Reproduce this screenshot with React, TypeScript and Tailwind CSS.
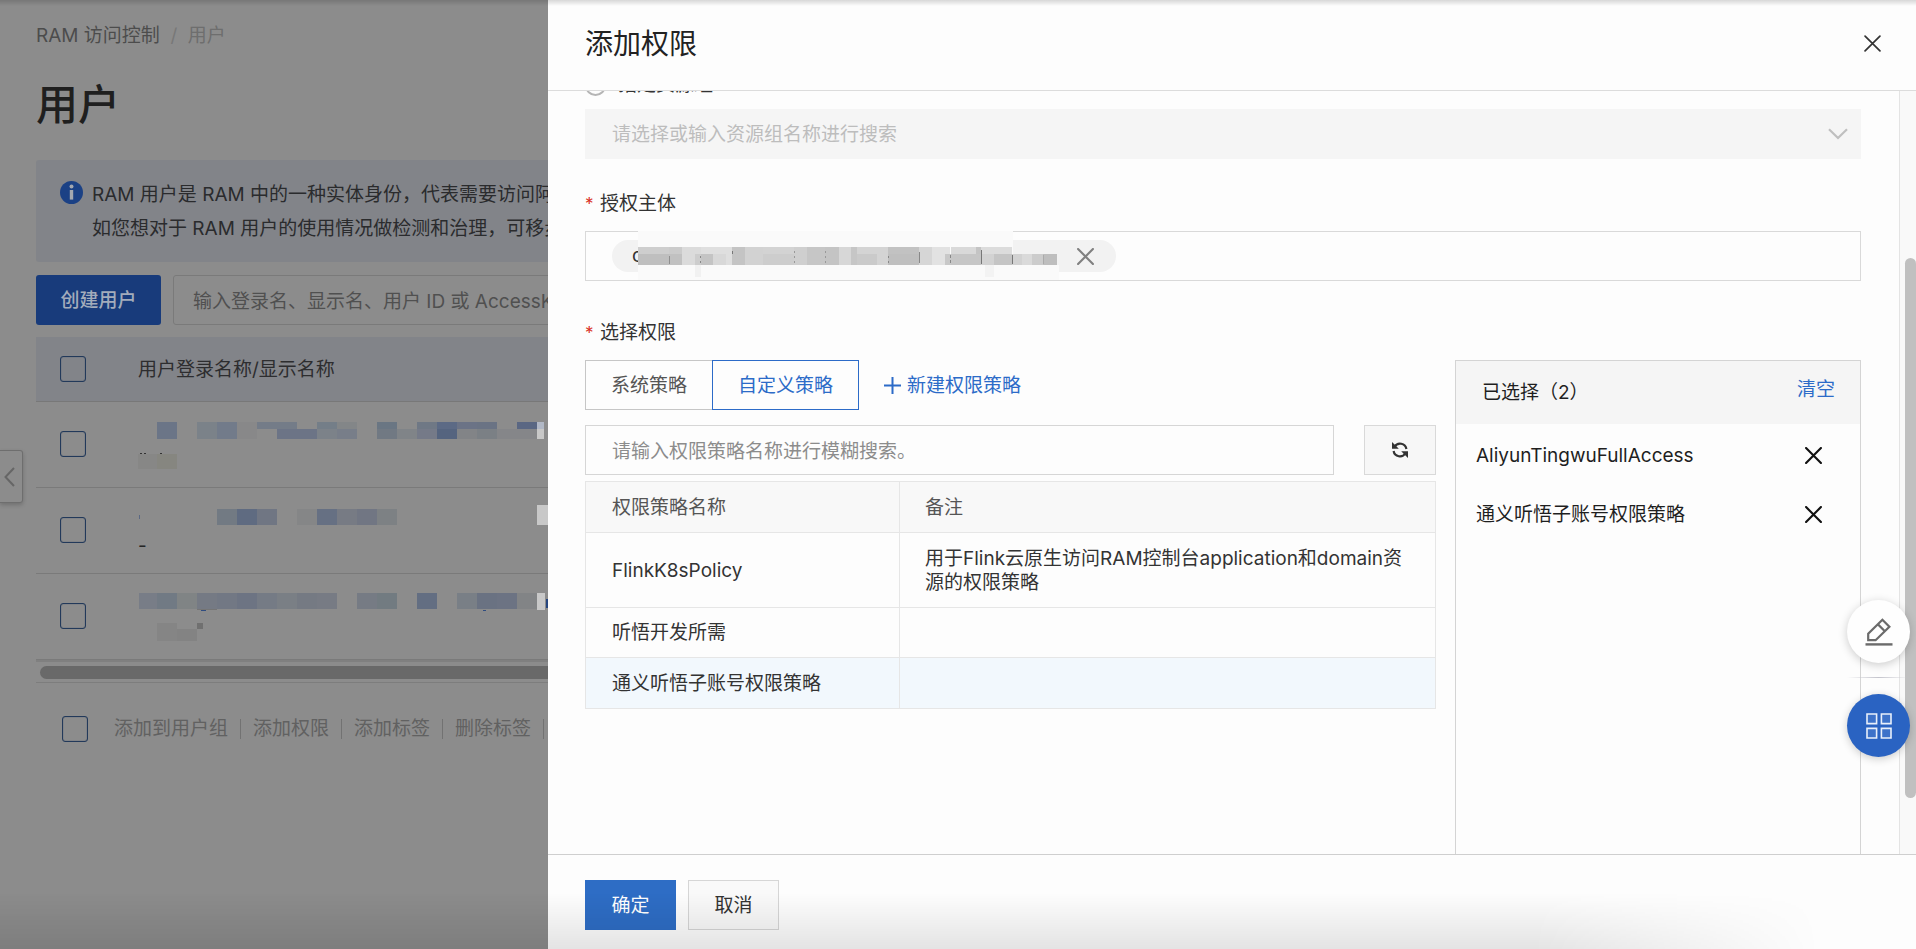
import React from 'react';

type Cell = [x: number, y: number, w: number, h: number, fill: string];

const ROWS: { name: Cell[]; desc: Cell[] | string }[] = [
  {
    name: [
      [19, 20, 20, 17, '#6b7587'],
      [59, 20, 20, 17, '#7b8289'],
      [79, 20, 20, 17, '#727b8a'],
      [99, 20, 20, 17, '#888889'],
      [119, 20, 40, 7, '#747c88'],
      [139, 27, 40, 10, '#6c7486'],
      [179, 20, 20, 7, '#747e88'],
      [179, 27, 20, 10, '#7c8289'],
      [199, 20, 20, 7, '#838688'],
      [199, 27, 20, 10, '#787e89'],
      [239, 20, 20, 7, '#6a7683'],
      [239, 27, 20, 10, '#717983'],
      [259, 27, 20, 10, '#808488'],
      [279, 20, 20, 7, '#6f7885'],
      [279, 27, 20, 10, '#757a88'],
      [299, 20, 20, 7, '#5c6a85'],
      [299, 27, 20, 10, '#55647f'],
      [319, 20, 20, 7, '#6b7386'],
      [319, 27, 20, 10, '#828487'],
      [339, 20, 20, 7, '#6a7384'],
      [339, 27, 20, 10, '#7b8085'],
      [359, 27, 40, 10, '#858689'],
      [379, 20, 20, 7, '#5a6783'],
      [399, 20, 7, 7, '#b1b8c6'],
      [399, 27, 7, 10, '#c8c8c8'],
    ],
    desc: [
      [2, 7, 2, 1, '#333333'],
      [6, 7, 2, 1, '#333333'],
      [22, 7, 2, 1, '#333333'],
      [0, 8, 19, 15, '#878786'],
      [19, 8, 20, 15, '#868680'],
    ],
  },
  {
    name: [
      [1, 27, 1, 4, '#5a6883'],
      [79, 21, 20, 16, '#727a83'],
      [99, 21, 20, 16, '#5f6b81'],
      [119, 21, 20, 16, '#707683'],
      [159, 21, 20, 16, '#858687'],
      [179, 21, 20, 16, '#667083'],
      [199, 21, 20, 16, '#777b84'],
      [219, 21, 20, 16, '#717683'],
      [239, 21, 20, 16, '#7d8184'],
      [399, 17, 11, 20, '#c8c8c8'],
    ],
    desc: '-',
  },
  {
    name: [
      [1, 19, 18, 16, '#787d87'],
      [19, 19, 20, 16, '#717a84'],
      [39, 19, 20, 16, '#808485'],
      [59, 19, 20, 16, '#757a84'],
      [79, 19, 20, 16, '#727884'],
      [99, 19, 20, 16, '#6d7483'],
      [119, 19, 20, 16, '#757b85'],
      [139, 19, 20, 16, '#7a7f85'],
      [159, 19, 20, 16, '#757a83'],
      [179, 19, 20, 16, '#777b84'],
      [219, 19, 20, 16, '#767b84'],
      [239, 19, 20, 16, '#727b81'],
      [279, 19, 20, 16, '#636e82'],
      [319, 19, 20, 16, '#797f86'],
      [339, 19, 20, 16, '#6a7282'],
      [359, 19, 20, 16, '#6c7383'],
      [379, 19, 20, 16, '#828486'],
      [59, 35, 20, 1, '#757575'],
      [63, 36, 5, 1, '#2f4c80'],
      [345, 36, 3, 1, '#2f4c80'],
      [399, 19, 8, 17, '#c8c8c8'],
      [408, 25, 2, 9, '#26467f'],
    ],
    desc: [
      [19, 5, 20, 18, '#858585'],
      [39, 11, 20, 12, '#838383'],
      [59, 5, 6, 6, '#707070'],
    ],
  },
];

const TAG_CELLS: Cell[] = [
  [26, 0, 375, 49, '#fafafa'],
  [400, 34, 47, 15, '#fafafa'],
  [26, 16, 31, 18, '#cecece'],
  [26, 23, 31, 11, '#bfbfbf'],
  [57, 16, 13, 18, '#cbcbcb'],
  [70, 16, 19, 18, '#dbdbdb'],
  [83, 34, 6, 12, '#f1f1f1'],
  [57, 23, 13, 11, '#c1c1c1'],
  [83, 23, 6, 11, '#cdcdcd'],
  [89, 16, 31, 18, '#dfdfdf'],
  [89, 23, 12, 11, '#c4c4c4'],
  [101, 23, 13, 11, '#d8d8d8'],
  [120, 16, 13, 18, '#c4c4c4'],
  [133, 16, 18, 18, '#d2d2d2'],
  [151, 16, 31, 18, '#d3d3d3'],
  [151, 23, 31, 11, '#cdcdcd'],
  [182, 16, 13, 18, '#cfcfcf'],
  [195, 16, 18, 18, '#c6c6c6'],
  [213, 16, 14, 18, '#c4c4c4'],
  [227, 16, 12, 18, '#d7d7d7'],
  [239, 16, 6, 18, '#c6c6c6'],
  [245, 16, 31, 18, '#d4d4d4'],
  [245, 23, 20, 11, '#cacaca'],
  [276, 16, 31, 18, '#c2c2c2'],
  [276, 23, 31, 11, '#bfbfbf'],
  [307, 16, 13, 18, '#d6d6d6'],
  [320, 16, 18, 18, '#e2e2e2'],
  [333, 23, 6, 11, '#c8c8c8'],
  [339, 16, 30, 18, '#d9d9d9'],
  [339, 23, 30, 11, '#c6c6c6'],
  [364, 16, 5, 7, '#c4c4c4'],
  [369, 16, 31, 18, '#dcdcdc'],
  [369, 23, 13, 11, '#d2d2d2'],
  [382, 23, 18, 11, '#c5c5c5'],
  [373, 34, 9, 12, '#f3f3f3'],
  [400, 23, 10, 11, '#d2d2d2'],
  [410, 23, 10, 11, '#dadada'],
  [420, 23, 11, 11, '#cccccc'],
  [431, 23, 14, 11, '#bebebe'],
  [57, 25, 1, 8, '#8f8f8f'],
  [88, 25, 1, 2, '#888888'],
  [88, 30, 1, 2, '#888888'],
  [120, 20, 1, 3, '#777777'],
  [182, 20, 1, 2, '#999999'],
  [182, 25, 1, 2, '#999999'],
  [182, 30, 1, 2, '#999999'],
  [213, 20, 1, 2, '#999999'],
  [213, 25, 1, 2, '#999999'],
  [213, 30, 1, 2, '#999999'],
  [276, 25, 1, 2, '#888888'],
  [276, 30, 1, 2, '#888888'],
  [307, 21, 1, 11, '#888888'],
  [338, 24, 1, 3, '#888888'],
  [338, 29, 1, 3, '#888888'],
  [369, 19, 1, 14, '#777777'],
  [400, 24, 1, 9, '#777777'],
  [431, 24, 1, 9, '#aaaaaa'],
];

function Mosaic({ cells, width, height }: { cells: Cell[]; width: number; height: number }) {
  return (
    <svg width={width} height={height} className="block shrink-0" shapeRendering="crispEdges" aria-hidden="true">
      {cells.map(([x, y, w, h, fill], i) => (
        <rect key={i} x={x} y={y} width={w} height={h} fill={fill} />
      ))}
    </svg>
  );
}

function Cross({ size, stroke }: { size: number; stroke: number }) {
  return (
    <svg width={size} height={size} viewBox="0 0 16 16" fill="none" stroke="currentColor" strokeWidth={stroke} strokeLinecap="round" aria-hidden="true">
      <path d="M1 1l14 14M15 1L1 15" />
    </svg>
  );
}

function Check({ label }: { label: string }) {
  return (
    <input
      type="checkbox"
      aria-label={label}
      className="block size-[26px] shrink-0 appearance-none rounded-[3px] border border-[#22395a] shadow-[inset_0_0_1px_#22395a]"
    />
  );
}

const BATCH = ['添加到用户组', '添加权限', '添加标签', '删除标签'];

function UsersPage() {
  return (
    <main className="h-full w-[548px] shrink-0 overflow-hidden bg-[#8c8c8c] pl-9 whitespace-nowrap">
      <nav className="flex pt-[22px] leading-7 text-[#4c4c4c]">
        <a href="#ram">RAM 访问控制</a>
        <span className="w-7 text-center text-[#787878]">/</span>
        <span className="text-[#6e6e6e]">用户</span>
      </nav>
      <h1 className="mt-[23px] text-[42px] leading-[64px] font-medium text-[#1f1f1f]">用户</h1>
      <div className="mt-[23px] flex h-[102px] w-[1200px] rounded-[3px] bg-[#828489] pt-[18px] pl-6 text-[#2a2b2d]">
        <svg width="23" height="23" viewBox="0 0 23 23" className="mt-[3px] mr-[9px] shrink-0" aria-hidden="true">
          <circle cx="11.5" cy="11.5" r="11.5" fill="#1b4185" />
          <circle cx="11.5" cy="5.6" r="2" fill="#a3a8b0" />
          <rect x="9.8" y="9" width="3.4" height="9.6" fill="#a3a8b0" />
        </svg>
        <div className="leading-[34px]">
          <p>RAM 用户是 RAM 中的一种实体身份，代表需要访问阿里云的人员或应用程序。</p>
          <p>如您想对于 RAM 用户的使用情况做检测和治理，可移步云治理中心。</p>
        </div>
      </div>
      <div className="mt-[13px] flex w-[1200px] gap-3">
        <button className="h-[50px] w-[125px] rounded-[3px] bg-[#183b7b] pt-0.5 font-medium text-[#a3acbb]">创建用户</button>
        <input
          aria-label="搜索用户"
          placeholder="输入登录名、显示名、用户 ID 或 AccessKey ID"
          className="h-[50px] w-[600px] rounded-[3px] border border-[#7a7a7a] px-[19px] pt-0.5 placeholder:text-[#505050]"
        />
      </div>
      <table className="mt-3 w-[1200px] table-fixed border-collapse">
        <thead>
          <tr className="h-16 border-b border-[#787878] bg-[#828489]">
            <th className="w-[102px] pl-6">
              <Check label="全选用户" />
            </th>
            <th className="pt-0.5 text-left font-normal text-[#2d2d2f]">用户登录名称/显示名称</th>
          </tr>
        </thead>
        <tbody>
          {ROWS.map((row, i) => (
            <tr key={i} className="h-[86px] border-b border-[#7a7a7a]">
              <td className="pl-6">
                <Check label={`选择用户 ${i + 1}`} />
              </td>
              <td className="p-0 align-top">
                <Mosaic cells={row.name} width={410} height={44} />
                {typeof row.desc === 'string' ? (
                  <div className="leading-7 text-[#262626]">{row.desc}</div>
                ) : (
                  <Mosaic cells={row.desc} width={410} height={40} />
                )}
              </td>
            </tr>
          ))}
        </tbody>
      </table>
      <div className="w-[1200px] border-t-2 border-b border-t-[#808080] border-b-[#7d7d7d] pt-1 pb-[3px] pl-1">
        <div className="h-[13px] rounded-full bg-[#696969]" />
      </div>
      <div className="flex items-center pt-8 pl-[26px]">
        <Check label="全选" />
        <div className="flex items-center pl-3.5 text-[#616161]">
          {BATCH.map((item) => (
            <React.Fragment key={item}>
              <button className="px-3">{item}</button>
              <span className="h-5 w-px bg-[#727272]" />
            </React.Fragment>
          ))}
        </div>
      </div>
    </main>
  );
}

function Required({ children, htmlFor }: { children: string; htmlFor: string }) {
  return (
    <label htmlFor={htmlFor} className="flex h-6 items-center gap-[7px] pt-0.5 leading-6 text-[#333]">
      <span className="w-2 text-[17px] text-[#d93026]">*</span>
      {children}
    </label>
  );
}

const POLICIES = [
  { name: 'FlinkK8sPolicy', note: '用于Flink云原生访问RAM控制台application和domain资源的权限策略', row: 'h-[75px]' },
  { name: '听悟开发所需', note: '', row: 'h-[50px]' },
  { name: '通义听悟子账号权限策略', note: '', row: 'h-[51px] bg-[#f2f8fd]' },
];

const SELECTED = ['AliyunTingwuFullAccess', '通义听悟子账号权限策略'];

function Drawer() {
  return (
    <section role="dialog" aria-label="添加权限" className="flex h-full min-w-0 flex-1 flex-col bg-[#fdfdfd] text-[#333]">
      <header className="flex h-[91px] shrink-0 items-center justify-between border-b border-[#dcdcdc] pr-[35px] pb-[3px] pl-[37px]">
        <h2 className="text-[28px] leading-10 text-[#222]">添加权限</h2>
        <button aria-label="关闭" className="text-[#333]">
          <Cross size={17} stroke={1.6} />
        </button>
      </header>

      <div className="flex min-h-0 flex-1">
        <div className="min-w-0 flex-1 overflow-hidden pr-[38px] pl-[37px]">
          <div className="-mt-[18px] flex h-6 items-center gap-3">
            <input id="group" type="radio" disabled className="size-[21px] appearance-none rounded-full border-2 border-[#b5b5b5]" />
            <label htmlFor="group" className="leading-6">指定资源组</label>
          </div>
          <div className="relative mt-3">
            <select
              aria-label="资源组"
              disabled
              className="block h-[50px] w-full appearance-none bg-[#f5f5f5] px-[27px] pt-0.5 text-[#bdbdbd] opacity-100"
            >
              <option>请选择或输入资源组名称进行搜索</option>
            </select>
            <svg width="20" height="12" viewBox="0 0 20 12" fill="none" stroke="#bfbfbf" strokeWidth="2.2" className="absolute top-[19px] right-[13px]" aria-hidden="true">
              <path d="M1 1.2L10 10l9-8.8" />
            </svg>
          </div>

          <div className="mt-8">
            <Required htmlFor="principal">授权主体</Required>
            <div className="relative mt-4 flex h-[50px] items-center border border-[#d9d9d9] pl-[26px]">
              <div className="flex h-8 w-[504px] items-center rounded-full bg-[#f2f2f2] pr-[22px] pl-5">
                <span className="flex-1">c</span>
                <button aria-label="移除授权主体" className="text-[#808080]">
                  <Cross size={17} stroke={2} />
                </button>
              </div>
              <input id="principal" className="min-w-0 flex-1 outline-none" />
              <div className="pointer-events-none absolute -top-px left-[26px]">
                <Mosaic cells={TAG_CELLS} width={450} height={50} />
              </div>
            </div>
          </div>

          <div className="mt-[39px]">
            <Required htmlFor="policy">选择权限</Required>
            <div className="mt-4 flex gap-[19px]">
              <div className="min-w-0 flex-1">
                <div className="flex h-[50px] items-stretch">
                  <button className="border border-r-0 border-[#c6c6c6] px-[25px] pt-0.5 text-[#555]">系统策略</button>
                  <button className="border border-[#2c6bc8] px-[25px] pt-0.5 text-[#2c6bc8]">自定义策略</button>
                  <a href="#new-policy" className="ml-[25px] flex items-center gap-1.5 text-[#2c6bc8]">
                    <svg width="17" height="17" viewBox="0 0 17 17" stroke="currentColor" strokeWidth="2" aria-hidden="true">
                      <path d="M8.5 0v17M0 8.5h17" />
                    </svg>
                    <span className="pt-0.5">新建权限策略</span>
                  </a>
                </div>
                <div className="mt-[15px] flex gap-[30px]">
                  <input
                    id="policy"
                    placeholder="请输入权限策略名称进行模糊搜索。"
                    className="h-[50px] min-w-0 flex-1 border border-[#d6d6d6] px-[26px] pt-0.5 placeholder:text-[#8c8c8c]"
                  />
                  <button aria-label="刷新" className="flex h-[50px] w-[72px] items-center justify-center border border-[#d9d9d9] bg-[#f7f7f7] text-[#333]">
                    <svg width="18" height="18" viewBox="0 0 18 18" fill="none" aria-hidden="true">
                      <path d="M3.6 5.8A6.4 6.4 0 0 1 15.4 8M14.4 12.2A6.4 6.4 0 0 1 2.6 10" stroke="currentColor" strokeWidth="2.2" />
                      <path d="M1 1v6.8h6.8zM17 17v-6.8h-6.8z" fill="currentColor" />
                    </svg>
                  </button>
                </div>
                <table className="mt-1.5 w-full table-fixed border-collapse border border-[#e3e3e3] text-left">
                  <thead>
                    <tr className="h-[51px] bg-[#f8f8f8] text-[#555]">
                      <th className="w-[314px] border border-[#e6e6e6] px-[26px] pt-0.5 font-normal">权限策略名称</th>
                      <th className="border border-[#e6e6e6] px-[25px] pt-0.5 font-normal">备注</th>
                    </tr>
                  </thead>
                  <tbody>
                    {POLICIES.map((p) => (
                      <tr key={p.name} className={p.row}>
                        <td className="border border-[#e6e6e6] px-[26px] pt-0.5">{p.name}</td>
                        <td className="border border-[#e6e6e6] px-[25px] pt-0.5 leading-6">{p.note}</td>
                      </tr>
                    ))}
                  </tbody>
                </table>
              </div>

              <aside className="h-[560px] w-[406px] shrink-0 border border-[#d4d4d4] text-[#1f1f1f]">
                <div className="flex h-[63px] items-center justify-between bg-[#f5f5f5] pt-0.5 pr-[25px] pl-[26px]">
                  <span>已选择（2）</span>
                  <button className="pb-1.5 text-[#2c6bc8]">清空</button>
                </div>
                <ul>
                  {SELECTED.map((s) => (
                    <li key={s} className="flex h-[59px] items-center justify-between pt-1 pr-[38px] pl-5">
                      <span className="pt-0.5">{s}</span>
                      <button aria-label={`移除 ${s}`} className="text-[#111]">
                        <Cross size={17} stroke={2} />
                      </button>
                    </li>
                  ))}
                </ul>
              </aside>
            </div>
          </div>
        </div>
        <div className="w-[17px] shrink-0 border-l border-[#e4e4e4] bg-[#f9f9f9] pt-[167px] pl-[5px]">
          <div className="h-[540px] rounded-full bg-[#c0c0c0]" />
        </div>
      </div>

      <footer className="flex h-[95px] shrink-0 items-start gap-3 border-t border-[#cfcfcf] pt-[25px] pl-[37px]">
        <button className="h-[50px] w-[91px] bg-[#2e6dc5] pt-0.5 text-white">确定</button>
        <button className="h-[50px] w-[91px] border border-[#d6d6d6] bg-[#f9f9f9] pt-0.5">取消</button>
      </footer>
    </section>
  );
}

export default function App() {
  return (
    <div className="relative flex h-screen overflow-hidden font-['Inter','Noto_Sans_CJK_SC',sans-serif] text-[19px]">
      <UsersPage />
      <Drawer />

      <button aria-label="展开侧栏" className="absolute top-[450px] left-0 flex h-[53px] w-[23px] items-center rounded-r-[3px] border border-l-0 border-[#6e6e6e] pl-1 text-[#666] shadow-[0_2px_4px_rgba(0,0,0,0.2)]">
        <svg width="11" height="20" viewBox="0 0 11 20" fill="none" stroke="currentColor" strokeWidth="2" aria-hidden="true">
          <path d="M10 1L1.5 10l8.5 9" />
        </svg>
      </button>

      <div className="absolute top-[600px] right-1.5 flex w-[63px] flex-col">
        <button aria-label="反馈" className="flex size-[63px] items-center justify-center rounded-full bg-[#fefefe] text-[#6b6b6b] shadow-[0_2px_10px_rgba(0,0,0,0.2)]">
          <svg width="28" height="28" viewBox="0 0 28 28" fill="none" stroke="currentColor" strokeWidth="2.2" aria-hidden="true">
            <path d="M3.2 22.2v-6.6L17.4 1.8l7 7L10.6 22.2zM13 6.4l6.6 6.6" />
            <path d="M0.5 26.4h27" strokeWidth="2.4" />
          </svg>
        </button>
        <div className="mt-3.5 mb-4 h-px bg-linear-to-r from-transparent via-[#c4c4cc] to-transparent" />
        <button aria-label="应用" className="flex size-[63px] items-center justify-center rounded-full bg-[#2a63c2] shadow-[0_2px_8px_rgba(0,0,0,0.2)]">
          <svg width="26" height="26" viewBox="0 0 26 26" fill="#3d72c9" stroke="#e8effa" strokeWidth="1.6" aria-hidden="true">
            <path d="M1 1h9.6v9.6H1zM15.4 1H25v9.6h-9.6zM1 15.4h9.6V25H1zM15.4 15.4H25V25h-9.6z" />
          </svg>
        </button>
      </div>

      <div className="pointer-events-none absolute inset-x-0 top-0 h-1.5 bg-linear-to-b from-black/15 to-transparent" />
      <div className="pointer-events-none absolute bottom-0 left-0 h-14 w-full bg-linear-to-b from-transparent to-black/10 mask-r-from-80% mask-r-to-95%" />
    </div>
  );
}
